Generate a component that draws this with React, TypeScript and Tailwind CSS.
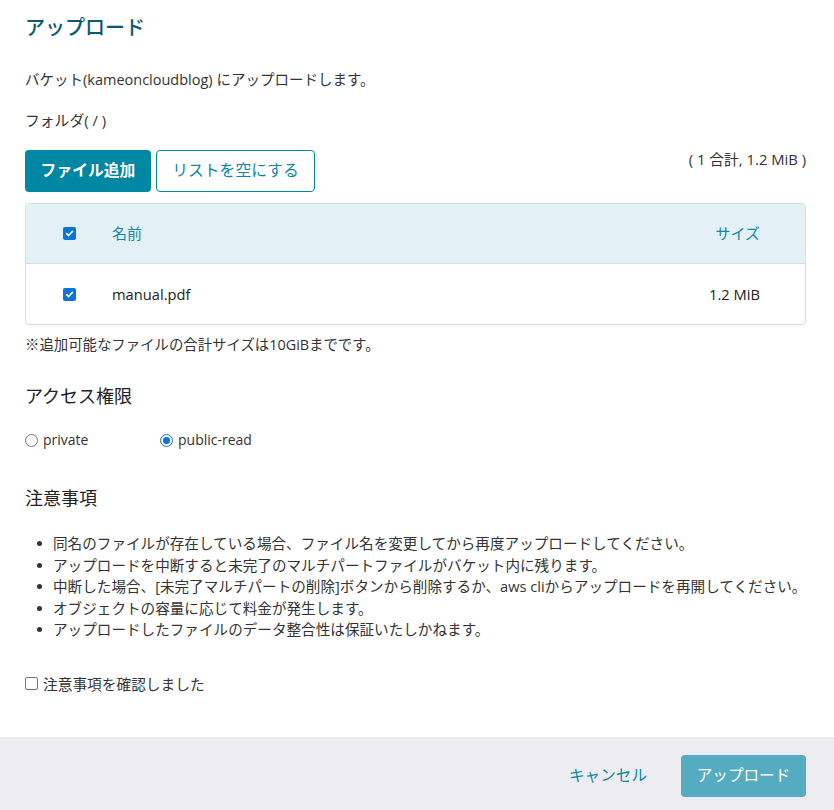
import React from "react";

const font = { fontFamily: '"Open Sans", "Noto Sans CJK JP", sans-serif' };

function Check({ checked }: { checked: boolean }) {
  return checked ? (
    <span className="inline-flex h-[13px] w-[13px] items-center justify-center rounded-[2px] bg-[#0b73d9]">
      <svg width="9" height="9" viewBox="0 0 10 10">
        <path d="M1.8 5.2 L4 7.3 L8.3 2.6" fill="none" stroke="white" strokeWidth="1.8" strokeLinecap="round" strokeLinejoin="round" />
      </svg>
    </span>
  ) : (
    <span className="inline-block h-[13px] w-[13px] rounded-[2px] border border-[#767676] bg-white" />
  );
}

function Radio({ checked }: { checked: boolean }) {
  return checked ? (
    <span className="inline-flex h-[13px] w-[13px] items-center justify-center rounded-full border border-[#0b73d9] bg-white">
      <span className="h-[7px] w-[7px] rounded-full bg-[#0b73d9]" />
    </span>
  ) : (
    <span className="inline-block h-[13px] w-[13px] rounded-full border border-[#767676] bg-white" />
  );
}

export default function App() {
  const notes = [
    "同名のファイルが存在している場合、ファイル名を変更してから再度アップロードしてください。",
    "アップロードを中断すると未完了のマルチパートファイルがバケット内に残ります。",
    "中断した場合、[未完了マルチパートの削除]ボタンから削除するか、aws cliからアップロードを再開してください。",
    "オブジェクトの容量に応じて料金が発生します。",
    "アップロードしたファイルのデータ整合性は保証いたしかねます。",
  ];
  return (
    <div className="flex min-h-[810px] w-[834px] flex-col bg-white text-[#333]" style={font}>
      <div className="flex-1 pl-[25px] pr-[28px]">
        <h1 className="pt-[13px] text-[20px] font-medium leading-[30px] text-[#0b5a6e]">アップロード</h1>
        <p className="mt-[27px] text-[14.5px] leading-[20px]">バケット(kameoncloudblog) にアップロードします。</p>
        <p className="mt-[20px] text-[14.8px] leading-[20px]">フォルダ( / )</p>
        <div className="mt-[20px] flex items-start justify-between">
          <div className="flex gap-[5px]">
            <button className="h-[42px] w-[126px] rounded-[4px] bg-[#0087a3] text-[15.8px] font-bold text-white">ファイル追加</button>
            <button className="h-[42px] w-[159px] rounded-[4px] border border-[#0087a3] bg-white text-[15.8px] text-[#0a87a3]">リストを空にする</button>
          </div>
          <span className="mt-[-1px] text-[14.8px] leading-[20px]">( 1 合計, 1.2 MiB )</span>
        </div>
        <div className="mt-[11px] overflow-hidden rounded-[4px] border border-[#d6dee3]">
          <div className="flex h-[60px] items-center border-b border-[#d6dee3] bg-[#e3f0f6] text-[15px] text-[#1387a3]">
            <div className="flex w-[86px] justify-center"><Check checked /></div>
            <div className="flex-1">名前</div>
            <div className="w-[100px] pr-[45px] text-right">サイズ</div>
          </div>
          <div className="flex h-[60px] items-center text-[14.7px] text-[#222]">
            <div className="flex w-[86px] justify-center"><Check checked /></div>
            <div className="flex-1">manual.pdf</div>
            <div className="w-[100px] pr-[45px] text-right">1.2 MiB</div>
          </div>
        </div>
        <p className="mt-[10px] text-[14.4px] leading-[20px]">※追加可能なファイルの合計サイズは10GiBまでです。</p>
        <h2 className="mt-[28px] text-[18px] leading-[26px] text-[#222]">アクセス権限</h2>
        <div className="mt-[21px] flex items-center text-[14px] leading-[20px]">
          <label className="flex w-[135px] items-center gap-[5px]"><Radio checked={false} /> private</label>
          <label className="flex items-center gap-[5px]"><Radio checked /> public-read</label>
        </div>
        <h2 className="mt-[35px] text-[18px] leading-[26px] text-[#222]">注意事項</h2>
        <ul className="mt-[22px] pl-[12px] text-[14.6px] leading-[21.5px]">
          {notes.map((n) => (
            <li key={n} className="flex items-center gap-[11px] whitespace-nowrap">
              <span className="h-[5px] w-[5px] shrink-0 rounded-full bg-[#333]" />
              <span>{n}</span>
            </li>
          ))}
        </ul>
        <label className="mt-[33px] flex items-center gap-[5px] text-[14.7px] leading-[20px]">
          <Check checked={false} />
          <span>注意事項を確認しました</span>
        </label>
      </div>
      <div className="mt-[41px] flex h-[73px] items-start justify-end gap-[34px] bg-[#ededf1] pr-[28px] pt-[18px]">
        <button className="h-[42px] text-[15.6px] text-[#0a87a3]">キャンセル</button>
        <button className="h-[42px] w-[125px] rounded-[4px] bg-[#55abc0] text-[15.6px] text-white">アップロード</button>
      </div>
    </div>
  );
}
